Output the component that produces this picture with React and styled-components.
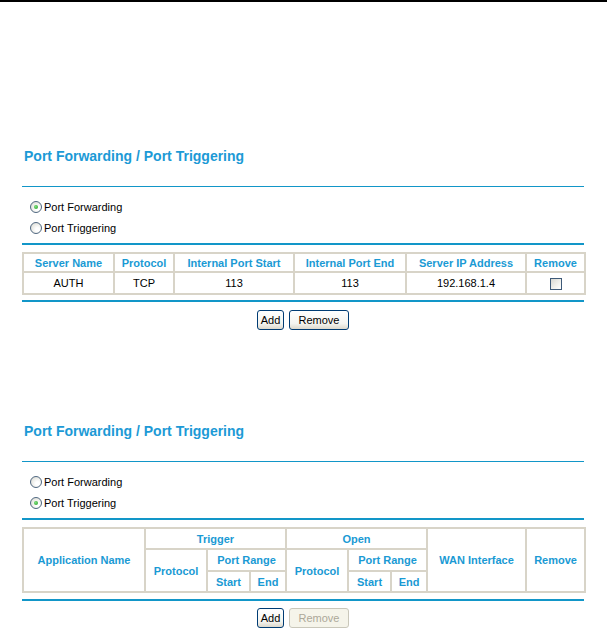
import React from "react";
import styled, { createGlobalStyle, css } from "styled-components";

const GlobalStyle = createGlobalStyle`
  html, body { margin: 0; padding: 0; background: #fff; }
  body { font-family: "Liberation Sans", Arial, sans-serif; color: #000; }
`;

const Page = styled.div`
  width: 607px;
  box-sizing: border-box;
  border-top: 2px solid #000;
  padding: 0 23px 0 22px;
`;

const Section = styled.section`
  padding-top: ${(p) => p.$top}px;
`;

const Title = styled.h2`
  margin: 0;
  padding-left: 2px;
  font-size: 14px;
  line-height: 16px;
  font-weight: bold;
  color: #1c9ad6;
`;

const Rule = styled.div`
  height: ${(p) => p.$h}px;
  margin-top: ${(p) => p.$mt}px;
  background: #1296c8;
`;

const RadioGroup = styled.div`
  padding: 9px 0 5px 8px;
`;

const RadioRow = styled.label`
  display: flex;
  align-items: center;
  gap: 2px;
  height: 21px;
  font-size: 11px;
`;

const RadioMark = styled.span`
  position: relative;
  width: 10px;
  height: 10px;
  border-radius: 50%;
  border: 1px solid #4f6780;
  background: radial-gradient(circle at 65% 65%, #ffffff 20%, #e6e6e0 70%, #d2d2ca 100%);
  ${(p) =>
    p.$checked &&
    css`
      &::after {
        content: "";
        position: absolute;
        left: 3px;
        top: 3px;
        width: 4px;
        height: 4px;
        border-radius: 50%;
        background: radial-gradient(circle at 40% 40%, #7fe07f, #1f9a1f);
      }
    `}
`;

const DataTable = styled.table`
  width: 100%;
  table-layout: fixed;
  border-collapse: collapse;
  margin-top: 7px;
  border: 2px solid #c9c5b8;
`;

const Col = styled.col`
  width: ${(p) => p.$w}px;
`;

const HeadCell = styled.th`
  border: 2px solid #d8d4c8;
  padding: 0;
  height: ${(p) => p.$h}px;
  font-size: 11px;
  font-weight: bold;
  color: #1a9ad4;
  text-align: center;
  vertical-align: middle;
`;

const Cell = styled.td`
  border: 2px solid #d8d4c8;
  padding: 0;
  height: ${(p) => p.$h}px;
  font-size: 11px;
  text-align: center;
  vertical-align: middle;
`;

const CheckMark = styled.span`
  display: inline-block;
  width: 10px;
  height: 10px;
  border: 1px solid #3e5a78;
  background: linear-gradient(135deg, #d8d8d2 0%, #f2f2ee 60%, #ffffff 100%);
  vertical-align: middle;
`;

const ButtonBar = styled.div`
  display: flex;
  justify-content: center;
  gap: 5px;
  margin-top: ${(p) => p.$mt}px;
`;

const Button = styled.button`
  box-sizing: border-box;
  width: ${(p) => p.$w}px;
  height: 20px;
  padding: 0;
  border: 1px solid #003c74;
  border-radius: 3px;
  background: linear-gradient(#ffffff 0%, #f4f4f0 70%, #dcd8cc 100%);
  font-family: "Liberation Sans", Arial, sans-serif;
  font-size: 11px;
  color: #000;
  &:disabled {
    border-color: #c9c7ba;
    color: #aca899;
    background: #f5f4ea;
  }
`;

function Radios({ checked }) {
  return (
    <RadioGroup>
      <RadioRow>
        <RadioMark $checked={checked === "fwd"} />
        Port Forwarding
      </RadioRow>
      <RadioRow>
        <RadioMark $checked={checked === "trig"} />
        Port Triggering
      </RadioRow>
    </RadioGroup>
  );
}

const fwdCols = [91, 60, 120, 112, 120, 59];
const trigCols = [122, 62, 43, 36, 62, 43, 36, 99, 59];

export default function App() {
  return (
    <>
      <GlobalStyle />
      <Page>
        <Section $top={146}>
          <Title>Port Forwarding / Port Triggering</Title>
          <Rule $h={1} $mt={22} />
          <Radios checked="fwd" />
          <Rule $h={2} $mt={0} />
          <DataTable>
            <colgroup>
              {fwdCols.map((w, i) => (
                <Col key={i} $w={w} />
              ))}
            </colgroup>
            <thead>
              <tr>
                <HeadCell $h={17}>Server Name</HeadCell>
                <HeadCell $h={17}>Protocol</HeadCell>
                <HeadCell $h={17}>Internal Port Start</HeadCell>
                <HeadCell $h={17}>Internal Port End</HeadCell>
                <HeadCell $h={17}>Server IP Address</HeadCell>
                <HeadCell $h={17}>Remove</HeadCell>
              </tr>
            </thead>
            <tbody>
              <tr>
                <Cell $h={20}>AUTH</Cell>
                <Cell $h={20}>TCP</Cell>
                <Cell $h={20}>113</Cell>
                <Cell $h={20}>113</Cell>
                <Cell $h={20}>192.168.1.4</Cell>
                <Cell $h={20}>
                  <CheckMark />
                </Cell>
              </tr>
            </tbody>
          </DataTable>
          <Rule $h={2} $mt={5} />
          <ButtonBar $mt={8}>
            <Button $w={27}>Add</Button>
            <Button $w={60}>Remove</Button>
          </ButtonBar>
        </Section>

        <Section $top={93}>
          <Title>Port Forwarding / Port Triggering</Title>
          <Rule $h={1} $mt={22} />
          <Radios checked="trig" />
          <Rule $h={2} $mt={0} />
          <DataTable>
            <colgroup>
              {trigCols.map((w, i) => (
                <Col key={i} $w={w} />
              ))}
            </colgroup>
            <thead>
              <tr>
                <HeadCell rowSpan={3}>Application Name</HeadCell>
                <HeadCell colSpan={3} $h={19}>Trigger</HeadCell>
                <HeadCell colSpan={3}>Open</HeadCell>
                <HeadCell rowSpan={3}>WAN Interface</HeadCell>
                <HeadCell rowSpan={3}>Remove</HeadCell>
              </tr>
              <tr>
                <HeadCell rowSpan={2}>Protocol</HeadCell>
                <HeadCell colSpan={2} $h={20}>Port Range</HeadCell>
                <HeadCell rowSpan={2}>Protocol</HeadCell>
                <HeadCell colSpan={2}>Port Range</HeadCell>
              </tr>
              <tr>
                <HeadCell $h={19}>Start</HeadCell>
                <HeadCell>End</HeadCell>
                <HeadCell>Start</HeadCell>
                <HeadCell>End</HeadCell>
              </tr>
            </thead>
          </DataTable>
          <Rule $h={2} $mt={6} />
          <ButtonBar $mt={7}>
            <Button $w={27}>Add</Button>
            <Button $w={60} disabled>
              Remove
            </Button>
          </ButtonBar>
        </Section>
      </Page>
    </>
  );
}
